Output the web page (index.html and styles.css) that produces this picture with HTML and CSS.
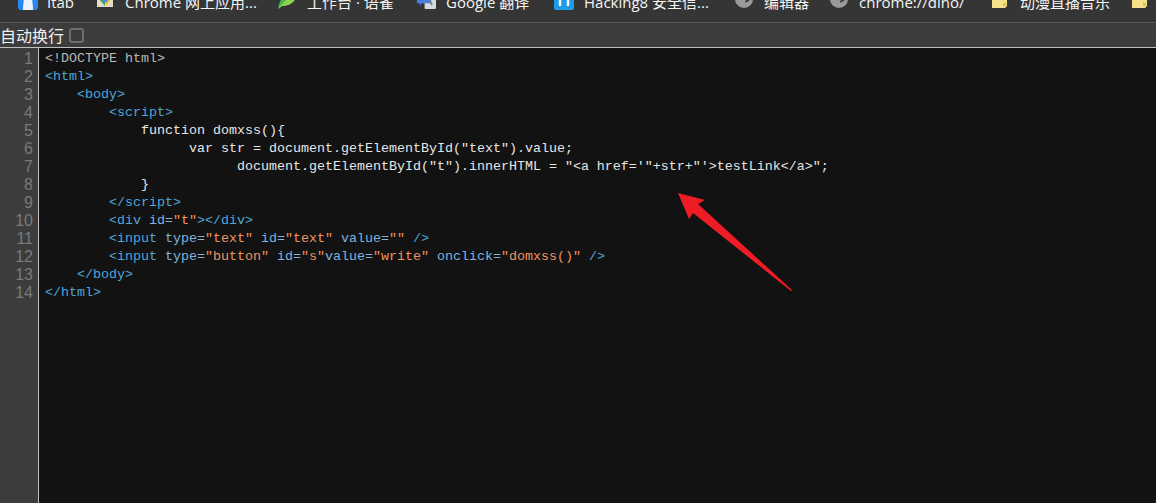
FILE: index.html
```html
<!DOCTYPE html>
<html lang="zh">
<head>
<meta charset="utf-8">
<title>Code view</title>
<link rel="stylesheet" href="styles.css">
</head>
<body>
<nav class="bookmarks">
  <a class="bm bm-itab"><svg class="ico" viewBox="0 0 20 20"><rect width="20" height="20" rx="3" fill="#2b86f0"/><path d="M5 20C5 9 8 0 10 0s5 9 5 20z" fill="#eaf3fd"/></svg><span>Itab</span></a>
  <a class="bm bm-store"><svg class="ico ico-store" viewBox="0 0 16 16"><rect width="16" height="16" fill="#e4dccb"/><path d="M2 8a6 6 0 0 1 12 0z" fill="#d9442f"/><path d="M8 3l6 5-5 7z" fill="#f2c230"/><path d="M2 8l6 7V8z" fill="#3ca64a"/><circle cx="8" cy="9" r="2.6" fill="#4a8be8"/></svg><span>Chrome 网上应用...</span></a>
  <a class="bm bm-work"><svg class="ico ico-leaf" viewBox="0 0 20 20"><path d="M0 20C2 8 8 2 20 0c0 10-6 17-16 17z" fill="#45b649"/><path d="M0 20C6 12 12 8 20 0c0 10-6 17-16 17z" fill="#8fd14f"/></svg><span>工作台 · 语雀</span></a>
  <a class="bm bm-translate"><svg class="ico ico-mid" viewBox="0 0 20 20"><rect x="8" y="6" width="12" height="14" rx="1" fill="#d5d8de"/><path d="M0 0h15v14H5l-2 3v-3H0z" fill="#4a7fe0"/><path d="M13 11l3 5" stroke="#777" stroke-width="1.5"/></svg><span>Google 翻译</span></a>
  <a class="bm bm-hack"><svg class="ico" viewBox="0 0 20 20"><rect width="20" height="20" rx="2" fill="#1e9be8"/><path d="M6 0v16M14 0v16M6 8h8" stroke="#fff" stroke-width="2.4" fill="none"/></svg><span>Hacking8 安全信...</span></a>
  <a class="bm bm-edit"><svg class="ico ico-globe" viewBox="0 0 18 18"><circle cx="9" cy="9" r="9" fill="#9a9a9a"/><path d="M10 0a9 9 0 0 1 7 6l-3 5-4 2 1-5-4-3z" fill="#3e3e3e"/></svg><span>编辑器</span></a>
  <a class="bm bm-dino"><svg class="ico ico-globe" viewBox="0 0 18 18"><circle cx="9" cy="9" r="9" fill="#9a9a9a"/><path d="M10 0a9 9 0 0 1 7 6l-3 5-4 2 1-5-4-3z" fill="#3e3e3e"/></svg><span>chrome://dino/</span></a>
  <a class="bm bm-anime"><svg class="ico ico-folder" viewBox="0 0 15 15"><path d="M0 0h15v13l-2 2H0z" fill="#f7e08a"/><path d="M11 10h3v3h-3z" fill="#e2bd55"/></svg><span>动漫直播音乐</span></a>
  <a class="bm bm-last"><svg class="ico ico-folder" viewBox="0 0 15 15"><path d="M0 0h15v13l-2 2H0z" fill="#f7e08a"/><path d="M11 10h3v3h-3z" fill="#e2bd55"/></svg></a>
</nav>
<div class="toolbar">
  <label class="wrap-label">自动换行</label>
  <span class="checkbox"></span>
</div>
<main class="editor">
  <div class="gutter">
    <div>1</div><div>2</div><div>3</div><div>4</div><div>5</div><div>6</div><div>7</div><div>8</div><div>9</div><div>10</div><div>11</div><div>12</div><div>13</div><div>14</div>
  </div>
<pre class="code"><span class="dt">&lt;!DOCTYPE html&gt;</span>
<span class="tag">&lt;html&gt;</span>
    <span class="tag">&lt;body&gt;</span>
        <span class="tag">&lt;script&gt;</span>
            function domxss(){
                  var str = document.getElementById("text").value;
                        document.getElementById("t").innerHTML = "&lt;a href='"+str+"'&gt;testLink&lt;/a&gt;";
            }
        <span class="tag">&lt;/script&gt;</span>
        <span class="tag">&lt;div</span> <span class="attr">id=</span><span class="val">"t"</span><span class="tag">&gt;&lt;/div&gt;</span>
        <span class="tag">&lt;input</span> <span class="attr">type=</span><span class="val">"text"</span> <span class="attr">id=</span><span class="val">"text"</span> <span class="attr">value=</span><span class="val">""</span> <span class="tag">/&gt;</span>
        <span class="tag">&lt;input</span> <span class="attr">type=</span><span class="val">"button"</span> <span class="attr">id=</span><span class="val">"s"</span><span class="attr">value=</span><span class="val">"write"</span> <span class="attr">onclick=</span><span class="val">"domxss()"</span> <span class="tag">/&gt;</span>
    <span class="tag">&lt;/body&gt;</span>
<span class="tag">&lt;/html&gt;</span></pre>
  <svg class="arrow" viewBox="0 0 1156 503" aria-hidden="true"><polygon points="678,193 705,200 698,204 792,290 791,291 693,213 689,219" fill="#ee1c25"/></svg>
</main>
</body>
</html>
```

FILE: styles.css
```css
html, body { margin: 0; padding: 0; height: 100%; overflow: hidden; }
body { display: flex; flex-direction: column; background: #121212; font-family: "Open Sans", "Noto Sans CJK SC", sans-serif; }

.bookmarks { flex: none; height: 22px; background: #353535; border-bottom: 1px solid #585858; display: flex; overflow: hidden; padding-left: 18px; }
.bm { display: flex; align-items: flex-end; gap: 9px; height: 10px; color: #f4f4f4; font-size: 15px; line-height: 20px; white-space: nowrap; flex: none; }
.bm span { margin-bottom: -2px; }
.ico { width: 20px; height: 20px; flex: none; }
.ico-store { width: 16px; height: 16px; margin-bottom: 3px; }
.ico-leaf { margin-bottom: 1px; }
.ico-mid { width: 19px; height: 19px; margin-bottom: 1px; }
.ico-globe { width: 18px; height: 18px; margin-bottom: 2px; }
.ico-folder { width: 15px; height: 15px; margin-bottom: 2px; }
.bm-itab { width: 79px; }
.bm-store { width: 181px; gap: 12px; }
.bm-work { width: 139px; }
.bm-translate { width: 137px; gap: 10px; }
.bm-hack { width: 181px; gap: 10px; }
.bm-edit { width: 95px; gap: 11px; }
.bm-dino { width: 162px; gap: 11px; }
.bm-anime { width: 140px; gap: 13px; }

.toolbar { flex: none; height: 24px; background: #3c3c3c; border-bottom: 1px solid #c0c0c0; display: flex; align-items: center; gap: 5px; color: #f0f0f0; font-size: 16px; }
.wrap-label { font-family: "Noto Sans CJK SC", sans-serif; line-height: 24px; }
.checkbox { width: 11px; height: 11px; border: 2px solid #6e6e6e; border-radius: 3px; }

.editor { flex: 1; display: flex; position: relative; min-height: 0; }
.gutter { flex: none; width: 33px; padding-right: 5px; padding-top: 2px; background: #3c3c3c; border-right: 1px solid #c0c0c0; color: #7a7a7a; font: 16px/18px "Liberation Sans", sans-serif; text-align: right; }
.code { margin: 0; padding: 2px 0 0 6px; flex: 1; color: #e6e6e6; font: 13.33px/18px "Liberation Mono", monospace; }
.dt { color: #b8b8b8; }
.tag { color: #4fa6d8; }
.attr { color: #7fb2de; }
.val { color: #ef9460; }
.arrow { position: absolute; left: 0; top: -48px; width: 1156px; height: 503px; pointer-events: none; }
```
